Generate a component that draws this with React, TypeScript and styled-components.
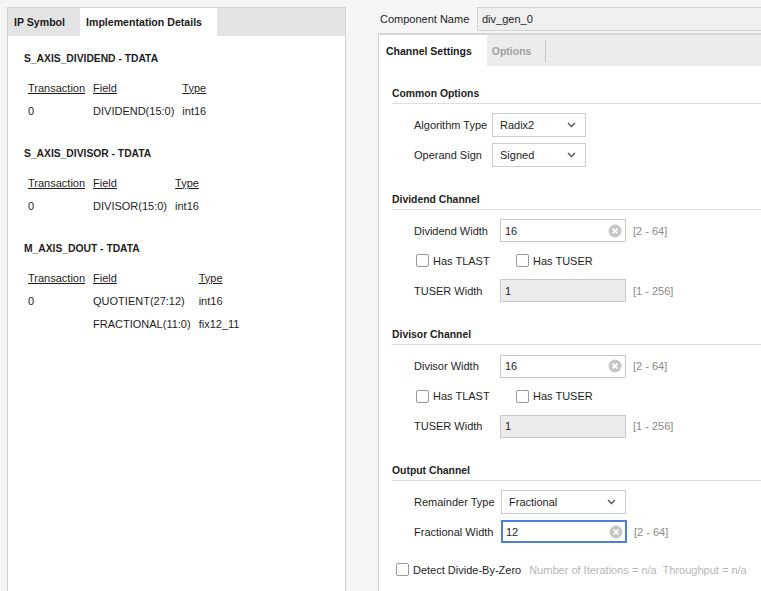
import React from 'react';
import styled, { createGlobalStyle } from 'styled-components';

const Global = createGlobalStyle`
  html, body { margin: 0; padding: 0; }
  body {
    background: #f5f5f5;
    font-family: "Liberation Sans", Arial, sans-serif;
    font-size: 11px;
    color: #1e1e1e;
  }
`;

const Page = styled.div`
  width: 761px;
  height: 591px;
  overflow: hidden;
  display: flex;
  align-items: flex-start;
  background: #f5f5f5;
`;

/* ---------- left panel ---------- */
const LeftPanel = styled.div`
  margin: 7px 0 0 7px;
  width: 339px;
  height: 584px;
  flex-shrink: 0;
  box-sizing: border-box;
  border: 1px solid #d3d3d3;
  border-bottom: none;
  background: #fff;
  display: flex;
  flex-direction: column;
`;

const LeftTabs = styled.div`
  height: 28px;
  display: flex;
  background: #e4e4e4;
`;

const LeftTab = styled.div<{ $active?: boolean }>`
  display: flex;
  align-items: center;
  padding: 0 15px 0 6px;
  font-weight: bold;
  font-size: 10.6px;
  color: #1a1a1a;
  background: ${p => (p.$active ? '#fff' : 'transparent')};
`;

const LeftBody = styled.div`
  padding: 16px 0 0 16px;
  display: flex;
  flex-direction: column;
  align-items: flex-start;
  gap: 25px;
`;

const DataSection = styled.div`
  display: flex;
  flex-direction: column;
  align-items: flex-start;
  gap: 10px;
`;

const DataTitle = styled.div`
  font-weight: bold;
  font-size: 10.3px;
  line-height: 14px;
`;

const Table = styled.table`
  border-collapse: collapse;
  margin-left: 4px;
  font-size: 11px;
`;

const Th = styled.th`
  text-align: left;
  font-weight: normal;
  text-decoration: underline;
  height: 23px;
  padding: 0 8px 0 0;
  white-space: nowrap;
`;

const Td = styled.td`
  height: 23px;
  padding: 0 8px 0 0;
  white-space: nowrap;
`;

/* ---------- right area ---------- */
const RightArea = styled.div`
  margin-left: 32px;
  width: 420px;
  flex-shrink: 0;
  height: 591px;
  display: flex;
  flex-direction: column;
`;

const NameRow = styled.div`
  margin-top: 7px;
  height: 24px;
  display: flex;
  align-items: center;
`;

const NameLabel = styled.div`
  width: 97px;
  padding-left: 2px;
`;

const NameInput = styled.div`
  flex: 1;
  height: 24px;
  box-sizing: border-box;
  border: 1px solid #d2d2d2;
  background: #efefef;
  display: flex;
  align-items: center;
  padding-left: 4px;
`;

const Pane = styled.div`
  margin-top: 2px;
  flex: 1;
  border-top: 2px solid #d6d6d6;
  border-left: 1px solid #d0d0d0;
  background: #fff;
  display: flex;
  flex-direction: column;
`;

const TabStrip = styled.div`
  height: 31px;
  background: #ececec;
  display: flex;
  align-items: center;
`;

const PaneTab = styled.div<{ $active?: boolean }>`
  height: ${p => (p.$active ? '31px' : '22px')};
  display: flex;
  align-items: center;
  padding: ${p => (p.$active ? '0 15px 0 7px' : '0 14px 0 5px')};
  font-weight: bold;
  font-size: 10.5px;
  background: ${p => (p.$active ? '#fff' : 'transparent')};
  color: ${p => (p.$active ? '#1a1a1a' : '#a0a0a0')};
  border-right: ${p => (p.$active ? 'none' : '1px solid #c6c6c6')};
`;

const PaneBody = styled.div`
  padding: 21px 0 0 13px;
  display: flex;
  flex-direction: column;
  gap: 22.5px;
`;

const Section = styled.div`
  display: flex;
  flex-direction: column;
`;

const SectionTitle = styled.div`
  font-weight: bold;
  font-size: 10.4px;
  line-height: 14px;
  padding-bottom: 2px;
  border-bottom: 1px solid #dedede;
  margin-bottom: 6px;
`;

const Row = styled.div<{ $label: number }>`
  height: 30px;
  padding-left: 22px;
  display: grid;
  grid-template-columns: ${p => p.$label}px auto auto;
  justify-content: start;
  align-items: center;
`;

const RowLabel = styled.div``;

const SelectBox = styled.div<{ $w: number }>`
  width: ${p => p.$w}px;
  height: 24px;
  box-sizing: border-box;
  border: 1px solid #cdcdcd;
  background: #fff;
  display: flex;
  align-items: center;
  justify-content: space-between;
  padding: 0 9px 0 7px;
`;

const TextBox = styled.div<{ $disabled?: boolean; $focus?: boolean }>`
  width: 126px;
  height: 23px;
  box-sizing: border-box;
  border: 1px solid ${p => (p.$focus ? '#4a7fd6' : '#c9c9c9')};
  box-shadow: ${p => (p.$focus ? 'inset 0 0 0 1px #4a7fd6' : 'none')};
  background: ${p => (p.$disabled ? '#ececec' : '#fff')};
  display: flex;
  align-items: center;
  justify-content: space-between;
  padding: 0 3px 0 4px;
`;

const Range = styled.div`
  margin-left: 7px;
  color: #8a8a8a;
`;

const CheckRow = styled.div`
  height: 30px;
  padding-left: 24px;
  display: flex;
  align-items: center;
`;

const CheckItem = styled.label<{ $w?: number }>`
  display: flex;
  align-items: center;
  gap: 4px;
  width: ${p => (p.$w ? `${p.$w}px` : 'auto')};
`;

const Box = styled.span`
  width: 13px;
  height: 13px;
  box-sizing: border-box;
  border: 1px solid #9a9a9a;
  border-radius: 2px;
  background: #fff;
  display: inline-block;
`;

const Muted = styled.span`
  margin-left: 8px;
  color: #b5b5b5;
  white-space: pre;
`;

const DetectRow = styled.div`
  margin-top: 13px;
  height: 20px;
  padding-left: 4px;
  display: flex;
  align-items: center;
`;

const Chevron = () => (
  <svg width="9" height="6" viewBox="0 0 9 6">
    <path d="M1 1 L4.5 4.5 L8 1" fill="none" stroke="#555" strokeWidth="1.4" />
  </svg>
);

const ClearIcon = () => (
  <svg width="14" height="14" viewBox="0 0 14 14">
    <circle cx="7" cy="7" r="6.5" fill="#c6c6c6" />
    <path d="M4.6 4.6 L9.4 9.4 M9.4 4.6 L4.6 9.4" stroke="#fff" strokeWidth="1.6" />
  </svg>
);

const Select = ({ value, w }: { value: string; w: number }) => (
  <SelectBox $w={w}>
    <span>{value}</span>
    <Chevron />
  </SelectBox>
);

const NumField = ({ value, disabled, focus }: { value: string; disabled?: boolean; focus?: boolean }) => (
  <TextBox $disabled={disabled} $focus={focus}>
    <span>{value}</span>
    {!disabled && <ClearIcon />}
  </TextBox>
);

const Check = ({ label, w }: { label: string; w?: number }) => (
  <CheckItem $w={w}>
    <Box />
    <span>{label}</span>
  </CheckItem>
);

type Field = { t: string; f: string; ty: string };
const tables: { title: string; rows: Field[] }[] = [
  { title: 'S_AXIS_DIVIDEND - TDATA', rows: [{ t: '0', f: 'DIVIDEND(15:0)', ty: 'int16' }] },
  { title: 'S_AXIS_DIVISOR - TDATA', rows: [{ t: '0', f: 'DIVISOR(15:0)', ty: 'int16' }] },
  {
    title: 'M_AXIS_DOUT - TDATA',
    rows: [
      { t: '0', f: 'QUOTIENT(27:12)', ty: 'int16' },
      { t: '', f: 'FRACTIONAL(11:0)', ty: 'fix12_11' },
    ],
  },
];

const ChannelSection = ({ title, widthLabel }: { title: string; widthLabel: string }) => (
  <Section>
    <SectionTitle>{title}</SectionTitle>
    <Row $label={86}>
      <RowLabel>{widthLabel}</RowLabel>
      <NumField value="16" />
      <Range>[2 - 64]</Range>
    </Row>
    <CheckRow>
      <Check label="Has TLAST" w={100} />
      <Check label="Has TUSER" />
    </CheckRow>
    <Row $label={86}>
      <RowLabel>TUSER Width</RowLabel>
      <NumField value="1" disabled />
      <Range>[1 - 256]</Range>
    </Row>
  </Section>
);

export default function App() {
  return (
    <>
      <Global />
      <Page>
        <LeftPanel>
          <LeftTabs>
            <LeftTab>IP Symbol</LeftTab>
            <LeftTab $active>Implementation Details</LeftTab>
          </LeftTabs>
          <LeftBody>
            {tables.map(s => (
              <DataSection key={s.title}>
                <DataTitle>{s.title}</DataTitle>
                <Table>
                  <thead>
                    <tr>
                      <Th>Transaction</Th>
                      <Th>Field</Th>
                      <Th>Type</Th>
                    </tr>
                  </thead>
                  <tbody>
                    {s.rows.map(r => (
                      <tr key={r.f}>
                        <Td>{r.t}</Td>
                        <Td>{r.f}</Td>
                        <Td>{r.ty}</Td>
                      </tr>
                    ))}
                  </tbody>
                </Table>
              </DataSection>
            ))}
          </LeftBody>
        </LeftPanel>

        <RightArea>
          <NameRow>
            <NameLabel>Component Name</NameLabel>
            <NameInput>div_gen_0</NameInput>
          </NameRow>
          <Pane>
            <TabStrip>
              <PaneTab $active>Channel Settings</PaneTab>
              <PaneTab>Options</PaneTab>
            </TabStrip>
            <PaneBody>
              <Section>
                <SectionTitle>Common Options</SectionTitle>
                <Row $label={78}>
                  <RowLabel>Algorithm Type</RowLabel>
                  <Select value="Radix2" w={94} />
                </Row>
                <Row $label={78}>
                  <RowLabel>Operand Sign</RowLabel>
                  <Select value="Signed" w={94} />
                </Row>
              </Section>
              <ChannelSection title="Dividend Channel" widthLabel="Dividend Width" />
              <ChannelSection title="Divisor Channel" widthLabel="Divisor Width" />
              <Section>
                <SectionTitle>Output Channel</SectionTitle>
                <Row $label={87}>
                  <RowLabel>Remainder Type</RowLabel>
                  <Select value="Fractional" w={125} />
                </Row>
                <Row $label={87}>
                  <RowLabel>Fractional Width</RowLabel>
                  <NumField value="12" focus />
                  <Range>[2 - 64]</Range>
                </Row>
                <DetectRow>
                  <Check label="Detect Divide-By-Zero" />
                  <Muted>Number of Iterations = n/a  Throughput = n/a</Muted>
                </DetectRow>
              </Section>
            </PaneBody>
          </Pane>
        </RightArea>
      </Page>
    </>
  );
}
